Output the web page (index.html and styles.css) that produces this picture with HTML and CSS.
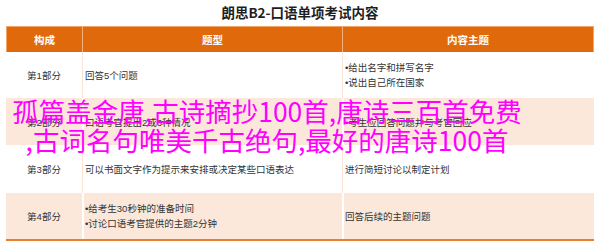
FILE: index.html
```html
<!DOCTYPE html>
<html lang="zh">
<head>
<meta charset="utf-8">
<link rel="stylesheet" href="styles.css">
</head>
<body>
<div class="page">
  <h1 class="title">朗思B2-口语单项考试内容</h1>
  <div class="table">
    <div class="th">构成</div>
    <div class="th">题型</div>
    <div class="th">内容主题</div>

    <div class="td c1 r-white h1">第1部分</div>
    <div class="td r-white h1">回答5个问题</div>
    <div class="td r-white h1 multi"><span>•给出名字和拼写名字</span><span>•说出自己所在国家</span></div>

    <div class="td c1 r-peach h2">第2部分</div>
    <div class="td r-peach h2">口语考官提出2或3种情况</div>
    <div class="td r-peach h2">•考生应回答问题并与考官回应</div>

    <div class="td c1 r-white h3">第3部分</div>
    <div class="td r-white h3">可以书面文字作为提示来安排或决定某些口语表达</div>
    <div class="td r-white h3">进行简短讨论以制定计划</div>

    <div class="td c1 r-peach h4">第4部分</div>
    <div class="td r-peach h4 multi"><span>•给考生30秒钟的准备时间</span><span>•讨论口语考官提供的主题2分钟</span></div>
    <div class="td r-peach h4">回答后续的主题问题</div>
  </div>
  <div class="overlay">孤篇盖金唐,古诗摘抄100首,唐诗三百首免费<br>,古词名句唯美千古绝句,最好的唐诗100首</div>
</div>
</body>
</html>
```

FILE: styles.css
```css
html, body {
  margin: 0;
  padding: 0;
  background: #ffffff;
}
.page {
  position: relative;
  width: 600px;
  height: 246px;
  padding: 0 6px;
  box-sizing: border-box;
  font-family: "Liberation Sans", "Noto Sans CJK SC", sans-serif;
  color: #333333;
  overflow: hidden;
}
.title {
  margin: 0;
  height: 26px;
  line-height: 24px;
  font-size: 13.5px;
  font-weight: bold;
  color: #1e1e1e;
  text-align: center;
  font-family: "Noto Sans CJK SC", sans-serif;
}
.table {
  display: grid;
  grid-template-columns: 76px 260px 252px;
  grid-template-rows: 26px 46px 47px 48px 46px;
  border-bottom: 2px solid #e9812e;
}
.th {
  background: #e0690b;
  color: #ffffff;
  font-size: 10.5px;
  font-weight: bold;
  display: flex;
  align-items: center;
  justify-content: center;
  border-top: 1px solid #f2a366;
  border-left: 1px solid #f5b27c;
  font-family: "Noto Sans CJK SC", sans-serif;
}
.th:first-child {
  border-left: 1px solid #f2a366;
}
.th:nth-child(3) {
  border-right: 1px solid #f2a366;
}
.td {
  font-size: 9.5px;
  display: flex;
  align-items: center;
  padding-left: 2px;
  color: #333333;
}
.td.c1 {
  justify-content: center;
  padding-left: 0;
}
.td.multi {
  flex-direction: column;
  align-items: flex-start;
  justify-content: center;
  line-height: 15px;
}
.r-white {
  background: #ffffff;
}
.r-white:not(.c1) {
  border-left: 1px solid #fbe4d4;
}
.r-peach {
  background: #fce8da;
}
.r-peach:not(.c1) {
  border-left: 2px solid #ffffff;
  padding-left: 1px;
}
.overlay {
  position: absolute;
  left: 6px;
  top: 96px;
  width: 522px;
  text-align: center;
  font-size: 26.5px;
  line-height: 29px;
  color: #ff00ff;
  font-family: "Noto Sans CJK SC", sans-serif;
  white-space: nowrap;
}
```
